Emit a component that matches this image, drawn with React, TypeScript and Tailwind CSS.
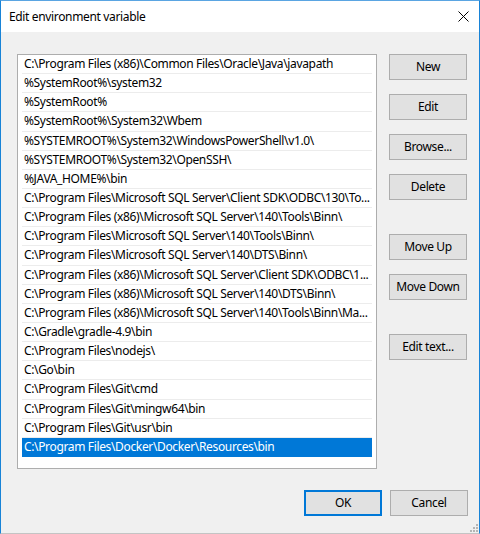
import React from "react"

const paths = [
  "C:\\Program Files (x86)\\Common Files\\Oracle\\Java\\javapath",
  "%SystemRoot%\\system32",
  "%SystemRoot%",
  "%SystemRoot%\\System32\\Wbem",
  "%SYSTEMROOT%\\System32\\WindowsPowerShell\\v1.0\\",
  "%SYSTEMROOT%\\System32\\OpenSSH\\",
  "%JAVA_HOME%\\bin",
  "C:\\Program Files\\Microsoft SQL Server\\Client SDK\\ODBC\\130\\To...",
  "C:\\Program Files (x86)\\Microsoft SQL Server\\140\\Tools\\Binn\\",
  "C:\\Program Files\\Microsoft SQL Server\\140\\Tools\\Binn\\",
  "C:\\Program Files\\Microsoft SQL Server\\140\\DTS\\Binn\\",
  "C:\\Program Files (x86)\\Microsoft SQL Server\\Client SDK\\ODBC\\1...",
  "C:\\Program Files (x86)\\Microsoft SQL Server\\140\\DTS\\Binn\\",
  "C:\\Program Files (x86)\\Microsoft SQL Server\\140\\Tools\\Binn\\Ma...",
  "C:\\Gradle\\gradle-4.9\\bin",
  "C:\\Program Files\\nodejs\\",
  "C:\\Go\\bin",
  "C:\\Program Files\\Git\\cmd",
  "C:\\Program Files\\Git\\mingw64\\bin",
  "C:\\Program Files\\Git\\usr\\bin",
  "C:\\Program Files\\Docker\\Docker\\Resources\\bin",
]

function WinButton({ label, className = "", primary = false }: { label: string; className?: string; primary?: boolean }) {
  return (
    <button
      className={
        "w-[78px] h-[26px] bg-[#e1e1e1] text-[12px] tracking-[-0.35px] text-black leading-none flex items-center justify-center " +
        (primary ? "border-2 border-[#0078d7] " : "border border-[#adadad] ") +
        className
      }
    >
      {label}
    </button>
  )
}

export default function App() {
  return (
    <div className="w-[480px] h-[534px] flex flex-col bg-[#f0f0f0] border-x border-t border-x-[#1883d7] border-t-[#5aa5e2] border-b border-b-[#c4c4c4] font-['Noto_Sans',sans-serif] text-black select-none">
      {/* Title bar */}
      <div className="h-[31px] bg-white flex items-center justify-between pl-[8px] pr-[10px] shrink-0">
        <span className="text-[12px] tracking-[-0.35px]">Edit environment variable</span>
        <svg width="11" height="11" viewBox="0 0 11 11">
          <path d="M0.5 0.5 L10.5 10.5 M10.5 0.5 L0.5 10.5" stroke="#000" strokeWidth="1" />
        </svg>
      </div>

      <div className="flex-1 flex flex-col pl-[16px] pr-[11px] pt-[22px] relative">
        <div className="flex gap-[12px]">
          {/* List */}
          <div className="w-[360px] h-[415px] bg-white border border-[#adadad] px-[4px] overflow-hidden">
            {paths.map((p, i) => {
              const selected = i === paths.length - 1
              return (
                <div
                  key={i}
                  className={
                    "h-[19.15px] flex items-center pl-[2px] text-[12px] tracking-[-0.35px] whitespace-nowrap overflow-hidden " +
                    (selected ? "bg-[#0078d7] text-white" : "border-b border-[#ececec]")
                  }
                >
                  {p}
                </div>
              )
            })}
          </div>

          {/* Buttons */}
          <div className="flex flex-col">
            <WinButton label="New" />
            <WinButton label="Edit" className="mt-[14px]" />
            <WinButton label="Browse..." className="mt-[14px]" />
            <WinButton label="Delete" className="mt-[14px]" />
            <WinButton label="Move Up" className="mt-[34px]" />
            <WinButton label="Move Down" className="mt-[14px]" />
            <WinButton label="Edit text..." className="mt-[34px]" />
          </div>
        </div>

        <div className="flex justify-end gap-[8px] mt-[21px]">
          <WinButton label="OK" primary />
          <WinButton label="Cancel" />
        </div>

        {/* resize grip */}
        <svg width="9" height="9" viewBox="0 0 9 9" className="absolute right-[1px] bottom-[1px]">
          <rect x="7" y="1" width="2" height="2" fill="#b5b5b5" />
          <rect x="4" y="4" width="2" height="2" fill="#b5b5b5" />
          <rect x="7" y="4" width="2" height="2" fill="#b5b5b5" />
          <rect x="1" y="7" width="2" height="2" fill="#b5b5b5" />
          <rect x="4" y="7" width="2" height="2" fill="#b5b5b5" />
          <rect x="7" y="7" width="2" height="2" fill="#b5b5b5" />
        </svg>
      </div>
    </div>
  )
}
